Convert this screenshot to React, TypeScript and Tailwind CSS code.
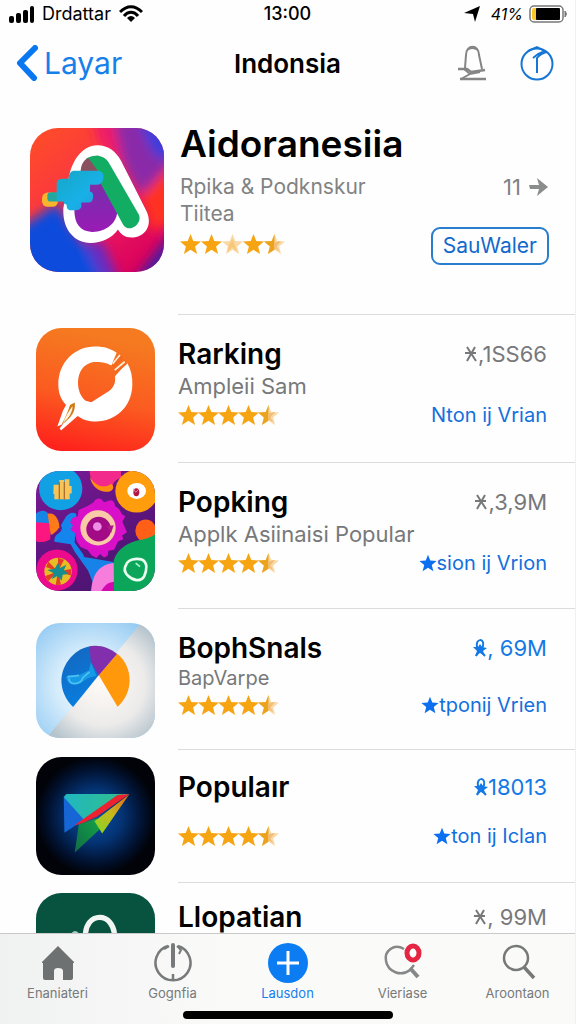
import type { ReactNode } from "react";

const STAR =
  "M12 1 L14.9 8.4 L23 8.9 L16.8 14 L18.9 22 L12 17.6 L5.1 22 L7.2 14 L1 8.9 L9.1 8.4 Z";
const HALF_STAR = "M12 1 L12 17.6 L5.1 22 L7.2 14 L1 8.9 L9.1 8.4 Z";

type Fill = "full" | "half" | "faint";

function Star({ fill }: { fill: Fill }) {
  return (
    <svg viewBox="1 0 22 23" className="h-[22px] w-[21px] shrink-0" aria-hidden="true">
      <path d={STAR} fill={fill === "full" ? "#f7a412" : "#f9d9a6"} />
      {fill === "half" && <path d={HALF_STAR} fill="#eba31d" />}
      {fill === "half" && <path d="M12 10 L19 8 L14 14 L17 19 L12 16 Z" fill="#f1bd78" />}
      {fill === "faint" && <path d="M12 6 L14 12 L17 20 L12 15 L7 20 L8 13 Z" fill="#f8c777" />}
    </svg>
  );
}

function Rating({ stars, wide }: { stars: Fill[]; wide?: boolean }) {
  return (
    <div className={wide ? "mt-1.5 flex" : "flex -space-x-px"} role="img" aria-label="4.5">
      {stars.map((s, i) => (
        <Star key={i} fill={s} />
      ))}
    </div>
  );
}

const USUAL: Fill[] = ["full", "full", "full", "full", "half"];

function HeroArt() {
  return (
    <svg viewBox="30 40 402 431" preserveAspectRatio="none" className="h-36 w-[134px]" aria-hidden="true">
      <defs>
        <clipPath id="heroClip"><rect x="30" y="40" width="402" height="431" rx="84" /></clipPath>
        <linearGradient id="heroBase" x1="0" y1="0" x2="0.8" y2="1">
          <stop offset="0" stopColor="#ff4f26" />
          <stop offset="0.35" stopColor="#fb3a3c" />
          <stop offset="0.6" stopColor="#f01e60" />
          <stop offset="1" stopColor="#d8005c" />
        </linearGradient>
        <linearGradient id="heroInner" x1="0" y1="0" x2="0" y2="1">
          <stop offset="0" stopColor="#a52b78" />
          <stop offset="0.5" stopColor="#7c2bb0" />
          <stop offset="1" stopColor="#9a1bb4" />
        </linearGradient>
        <linearGradient id="heroCyan" x1="0" y1="0" x2="1" y2="1">
          <stop offset="0" stopColor="#15a7c4" />
          <stop offset="0.6" stopColor="#18b0e8" />
          <stop offset="1" stopColor="#2b95cf" />
        </linearGradient>
        <filter id="heroBlur" x="-30%" y="-30%" width="160%" height="160%"><feGaussianBlur stdDeviation="16" /></filter>
      </defs>
      <g clipPath="url(#heroClip)">
        <rect x="30" y="40" width="402" height="431" fill="url(#heroBase)" />
        <g filter="url(#heroBlur)">
          <path d="M215 10 H300 L330 180 L240 90 Z" fill="#ee1a68" />
          <path d="M280 10 H460 V150 L370 250 L310 150 Z" fill="#8a2ba8" />
          <path d="M350 10 H470 V150 L400 120 Z" fill="#3a3cdc" />
          <path d="M460 140 L362 245 L395 350 L460 320 Z" fill="#ff3322" />
          <path d="M0 340 L110 265 L170 360 L280 500 H0 Z" fill="#0a4cdc" />
          <path d="M190 370 L250 385 L300 500 L240 480 Z" fill="#6a2ac0" />
          <path d="M460 340 L340 500 H460 Z" fill="#4a1fa0" />
        </g>
        <path d="M130 280 L144 210 C148 145 185 92 232 92 C266 92 287 111 303 138 L380 290 C400 335 372 368 335 368 C314 368 302 358 294 344 C274 371 245 384 212 384 C162 384 130 343 130 290 Z" fill="#fff" />
        <path d="M163 285 L181 180 C183 142 207 122 235 123 L292 285 C293 326 256 352 216 351 C180 350 163 326 163 285 Z" fill="url(#heroInner)" />
        <path d="M198 132 C221 118 253 119 267 145 L356 298 C370 326 328 356 310 330 L240 202 Z" fill="#12ad62" />
        <path d="M182 170 C183 146 194 134 205 130 L235 170 Z" fill="#8a5060" />
        <rect x="66" y="233" width="48" height="43" rx="17" fill="#f7b42d" />
        <rect x="82" y="232" width="55" height="28" rx="10" fill="#24a79f" />
        <path d="M160 168 H235 Q252 170 250 188 Q249 210 228 210 H210 V231 Q222 233 219 248 Q218 263 205 263 H184 V276 Q181 286 168 286 H149 Q139 284 140 270 L132 266 V259 H110 V204 Q112 193 124 192 H146 Q145 172 160 168 Z" fill="url(#heroCyan)" />
      </g>
    </svg>
  );
}

function OrangeArt() {
  return (
    <svg viewBox="35 25 357 368" preserveAspectRatio="none" className="h-[123px] w-[119px]" aria-hidden="true">
      <defs>
        <linearGradient id="orangeBg" x1="0.2" y1="0" x2="0" y2="1">
          <stop offset="0" stopColor="#f57a20" />
          <stop offset="0.5" stopColor="#fb5b20" />
          <stop offset="1" stopColor="#ff1a1c" />
        </linearGradient>
      </defs>
      <rect x="35" y="25" width="357" height="368" rx="76" fill="url(#orangeBg)" />
      <path d="M213 80 C240 80 258 86 277 99 L261 137 C240 125 224 126 207 127 C178 132 162 156 161 187 C161 211 169 230 184 243 L201 247 L247 218 C265 207 275 193 272 169 L308 128 C320 148 325 171 324 195 C323 260 274 305 215 305 C192 305 176 299 160 288 L110 332 L106 325 L116 312 L99 320 L116 272 L125 255 C108 236 102 217 102 193 C102 128 150 80 213 80 Z" fill="#fff" />
      <path d="M151 248 Q158 283 111 315 Q129 282 137 255 Z" fill="#d07a13" />
      <path d="M145 258 Q145 284 116 309 Q128 279 145 258 Z" fill="#fff4df" />
      <path d="M291 102 L263 140 L271 145 L296 119 Z M303 122 L267 154 L273 163 L309 132 Z" fill="#f56a1e" />
      <path d="M287 106 L265 132 M301 126 L271 151" stroke="#fff0dd" strokeWidth="5" />
    </svg>
  );
}

function PopArt() {
  return (
    <svg viewBox="35 27 357 361" preserveAspectRatio="none" className="h-[120px] w-[119px]" aria-hidden="true">
      <defs>
        <clipPath id="popClip"><rect x="35" y="27" width="357" height="361" rx="70" /></clipPath>
        <linearGradient id="popBg" x1="0" y1="0" x2="0.6" y2="1">
          <stop offset="0" stopColor="#7b1b98" /><stop offset="0.5" stopColor="#631583" /><stop offset="1" stopColor="#4a1570" />
        </linearGradient>
      </defs>
      <g clipPath="url(#popClip)">
        <rect x="35" y="27" width="357" height="361" fill="url(#popBg)" />
        <path d="M196 20 H290 V48 C270 55 262 66 266 80 C250 94 224 84 210 66 C199 53 195 38 196 20 Z" fill="#f12a8c" />
        <path d="M197 45 C218 80 246 77 261 65 C270 72 268 82 258 88 C231 96 201 75 197 45 Z" fill="#ff8d12" />
        <circle cx="109" cy="80" r="65" fill="#12a0e4" />
        <path d="M88 68 H105 V54 H119 V68 H121 V52 H135 V72 H142 V95 H136 V112 H90 V96 H87 Z" fill="#f5c45b" />
        <path d="M105 60 V113 M120 60 V113" stroke="#ad6e2b" strokeWidth="4" />
        <circle cx="337" cy="88" r="64" fill="#ff9d0c" />
        <ellipse cx="337" cy="87" rx="28" ry="24" fill="#fff" />
        <ellipse cx="336" cy="91" rx="9" ry="12" fill="#b31645" /><path d="M327 80 L334 91 L345 80" stroke="#dc8498" strokeWidth="3" fill="none" />
        <path d="M35 156 C48 144 64 148 77 157 L78 232 C64 241 47 243 35 238 Z" fill="#fb1680" />
        <path d="M35 155 Q55 139 71 154 L77 184 L35 181 Z" fill="#1686e6" />
        <path d="M70 156 C91 148 106 176 105 196 C97 208 85 219 79 219 Z" fill="#ff7a18" />
        <path d="M125 164 Q141 146 156 156 L151 242 L177 278 L196 333 L151 270 L139 247 L90 240 Q89 221 103 214 Q117 205 110 190 Z" fill="#1585ee" />
        <path d="M175 285 L268 301 L243 323 L208 369 Z" fill="#1782e8" />
        <ellipse cx="364" cy="207" rx="31" ry="34" fill="#ff5f16" />
        <path d="M190 132 L207 122 L214 113 Q224 106 232 113 L239 121 L258 115 Q271 115 272 132 L284 141 L293 157 L303 163 L294 180 L308 211 L293 221 L297 232 L281 239 L269 264 L252 267 L250 282 L239 287 L227 277 L216 289 L201 280 L190 265 L169 256 L157 238 L151 213 L138 204 L146 190 L137 181 L145 168 L160 163 L163 144 Z" fill="#d910c7" />
        <circle cx="221" cy="198" r="53" fill="#f8caa8" />
        <circle cx="223" cy="202" r="37" fill="#a30a85" />
        <path d="M247 193 L268 190 L260 214 Z" fill="#ad168b" />
        <circle cx="219" cy="194" r="13" fill="#ee8ee7" />
        <circle cx="98" cy="325" r="62" fill="#ec0a8d" />
        <circle cx="101" cy="329" r="41" fill="#e8bc25" />
        <path d="M101 329 L72 299 L65 316 Z M101 329 L101 288 L119 294 Z M101 329 L140 322 L140 341 Z M101 329 L110 369 L94 370 Z M101 329 L61 344 L72 358 Z" fill="#e33f24" />
        <path d="M101 303 L107 319 L126 309 L119 325 L132 337 L115 339 L112 357 L99 343 L83 352 L87 334 L69 325 L91 321 Z" fill="#168d91" />
        <path d="M200 390 C204 334 226 308 270 303 V390 Z" fill="#f77ddd" />
        <path d="M230 390 C242 366 257 360 273 360 V390 Z" fill="#d20ab0" />
        <path d="M268 298 C278 257 324 236 354 233 C378 230 388 217 400 216 V397 H269 Z" fill="#0ca65b" />
        <path d="M305 310 C311 292 334 289 352 293 C371 301 368 326 359 345 C350 362 325 356 311 342 C297 329 300 318 305 310 Z" fill="none" stroke="#eafff0" strokeWidth="8" />
        <path d="M334 304 L347 315" stroke="#b0f2ce" strokeWidth="5" />
      </g>
    </svg>
  );
}

function ArcArt() {
  return (
    <svg viewBox="35 24 356 345" preserveAspectRatio="none" className="h-[115px] w-[119px]" aria-hidden="true">
      <defs>
        <clipPath id="arcClip"><rect x="35" y="24" width="356" height="345" rx="72" /></clipPath>
        <radialGradient id="arcSky" gradientUnits="userSpaceOnUse" cx="200" cy="210" r="240">
          <stop offset="0" stopColor="#ffffff" /><stop offset="0.45" stopColor="#d3ebfb" /><stop offset="1" stopColor="#8fc8f2" />
        </radialGradient>
        <radialGradient id="arcLow" gradientUnits="userSpaceOnUse" cx="235" cy="205" r="210">
          <stop offset="0" stopColor="#fffaf5" /><stop offset="0.6" stopColor="#ecebea" /><stop offset="1" stopColor="#b4c3cc" />
        </radialGradient>
        <linearGradient id="arcBlue" x1="0" y1="0" x2="0.3" y2="1">
          <stop offset="0" stopColor="#1565bd" /><stop offset="1" stopColor="#087dde" />
        </linearGradient>
      </defs>
      <g clipPath="url(#arcClip)">
        <rect x="35" y="24" width="356" height="345" fill="url(#arcSky)" />
        <path d="M349 24 L72 362 V380 H400 V24 Z" fill="url(#arcLow)" />
        <path d="M146 276 C124 255 110 226 111 193 C113 146 152 96 208 92 L223 180 Z" fill="url(#arcBlue)" />
        <path d="M195 94 C228 88 254 99 278 117 L223 182 L199 139 Z" fill="#822fae" />
        <path d="M278 116 C302 135 315 164 315 195 C315 228 301 256 279 275 L223 181 Z" fill="#ff980b" />
        <path d="M199 142 L194 166 L163 181 L132 180 L125 186 C129 210 151 217 173 202 L190 190 L216 182 Z" fill="#159be5" />
        <path d="M129 186 L164 181 M134 190 C132 213 169 209 175 188 L195 171" fill="none" stroke="#51bff0" strokeWidth="5" />
      </g>
    </svg>
  );
}

function PlaneArt() {
  return (
    <svg viewBox="35 20 356 355" preserveAspectRatio="none" className="h-[118px] w-[119px]" aria-hidden="true">
      <defs>
        <radialGradient id="planeBg">
          <stop offset="0" stopColor="#074ba8" /><stop offset="0.45" stopColor="#043373" /><stop offset="0.8" stopColor="#01112f" /><stop offset="1" stopColor="#010309" />
        </radialGradient>
        <linearGradient id="planeTop"><stop offset="0" stopColor="#20b7c1" /><stop offset="1" stopColor="#32bf87" /></linearGradient>
        <linearGradient id="planeTail" x1="1" y1="0" x2="0" y2="1"><stop offset="0" stopColor="#13a347" /><stop offset="1" stopColor="#116b46" /></linearGradient>
        <linearGradient id="planeYellow" x1="1" y1="0" x2="0" y2="1"><stop offset="0" stopColor="#e26220" /><stop offset="0.5" stopColor="#c9b71b" /><stop offset="1" stopColor="#80d928" /></linearGradient>
      </defs>
      <rect x="35" y="20" width="356" height="355" rx="76" fill="url(#planeBg)" />
      <path d="M118 138 L190 202 L120 248 Z" fill="#1766d5" />
      <path d="M126 131 H314 L180 210 L118 140 Z" fill="url(#planeTop)" />
      <path d="M163 222 L217 204 L225 238 L151 307 Z" fill="url(#planeTail)" />
      <path d="M314 132 L233 250 L210 213 Z" fill="url(#planeYellow)" />
      <path d="M314 131 L279 134 L149 226 Q179 219 219 198 Z" fill="#ed2230" />
    </svg>
  );
}

function GreenArt() {
  return (
    <svg viewBox="35 429 356 356" className="size-[119px]" aria-hidden="true">
      <rect x="35" y="429" width="356" height="356" rx="76" fill="#07533f" />
      <path d="M183 562 C179 482 271 482 270 562" fill="none" stroke="#f3f5f2" strokeWidth="16" />
      <path d="M142 548 Q152 537 163 549 L155 570 Z" fill="#a6cdbf" />
    </svg>
  );
}

function Ribbon() {
  return (
    <svg viewBox="0 0 14 20" className="h-5 w-3.5" fill="none" stroke="currentColor" strokeWidth="2" aria-hidden="true">
      <path d="M4 9 C2 0 12 0 10 8 L3 18 M4 9 L12 18" />
      <path d="M0 9 L5 9 L7 6 L9 9 L14 10 L10 13 L12 18 L7 15 L2 18 L4 13 Z" fill="currentColor" stroke="none" />
    </svg>
  );
}

function CrossMark() {
  return (
    <svg viewBox="0 0 14 20" className="h-5 w-3.5" fill="none" stroke="currentColor" strokeWidth="2" aria-hidden="true">
      <path d="M3 3 L12 17 M11 3 L3 17 M1 9 H12" />
    </svg>
  );
}

function BlueStar() {
  return (
    <svg viewBox="1 0 22 23" className="size-[18px]" aria-hidden="true">
      <path d={STAR} fill="#0b6ff0" />
    </svg>
  );
}

type AppRow = {
  name: string;
  note?: string;
  noteClass?: string;
  art: ReactNode;
  artClass: string;
  bodyClass: string;
  count: string;
  blue?: boolean;
  action?: string;
  star?: boolean;
};

const ROWS: AppRow[] = [
  { name: "Rarking", note: "Ampleii Sam", noteClass: "text-[22px] leading-8", art: <OrangeArt />, artClass: "pt-[13px]", bodyClass: "pt-[23px] pb-[34px]", count: ",1SS66", action: "Nton ij Vrian" },
  { name: "Popking", note: "Applk Asiinaisi Popular", noteClass: "text-[22px] leading-8", art: <PopArt />, artClass: "pt-2", bodyClass: "pt-[23px] pb-8", count: ",3,9M", action: "sion ij Vrion", star: true },
  { name: "BophSnals", note: "BapVarpe", noteClass: "text-xl leading-7", art: <ArcArt />, artClass: "pt-3.5", bodyClass: "pt-[23px] pb-[31px]", count: ", 69M", blue: true, action: "tponij Vrien", star: true },
  { name: "Populaır", art: <PlaneArt />, artClass: "pt-[7px]", bodyClass: "pt-[21px] pb-[33px]", count: "18013", blue: true, action: "ton ij Iclan", star: true },
  { name: "Llopatian", art: <GreenArt />, artClass: "pt-2.5", bodyClass: "pt-[18px] pb-8", count: ", 99M" },
];

function Row({ row }: { row: AppRow }) {
  return (
    <li className="flex">
      <div className={`w-[178px] shrink-0 pl-9 ${row.artClass}`}>{row.art}</div>
      <div className={`min-w-0 flex-1 border-b border-[#dcdcdc] pr-7 ${row.bodyClass}`}>
        <div className="flex items-center justify-between">
          <h2 className="text-[28px] leading-8 font-semibold">{row.name}</h2>
          <span className={`flex items-center text-[22px] leading-8 whitespace-pre ${row.blue ? "text-[#1479e6]" : "text-[#77787a]"}`}>
            {row.blue ? <Ribbon /> : <CrossMark />}
            {row.count}
          </span>
        </div>
        {row.note && <p className={`text-[#77787a] ${row.noteClass}`}>{row.note}</p>}
        {row.action && (
          <div className={`flex h-[26px] items-center justify-between ${row.note ? "" : "mt-5"}`}>
            <Rating stars={USUAL} />
            <a href="#open" className="flex items-center text-xl leading-6 text-[#1270dd]">
              {row.star && <BlueStar />}
              {row.action}
            </a>
          </div>
        )}
      </div>
    </li>
  );
}

function HomeIcon() {
  return (
    <svg viewBox="0 0 40 40" className="size-10" fill="#6e7172" aria-hidden="true">
      <path d="M20 3 L36 19 V20 H35 V35 Q35 37 33 37 H25 V28 Q25 25 20 25 Q16 25 16 28 V37 H7 Q5 37 5 35 V20 H4 V19 Z" />
    </svg>
  );
}

function DialIcon() {
  return (
    <svg viewBox="0 0 40 40" className="size-10" fill="none" stroke="#77797a" aria-hidden="true">
      <path d="M15 3 A17.5 17.5 0 1 0 25 3" strokeWidth="2.5" />
      <path d="M20 2 V23" strokeWidth="4" strokeLinecap="round" />
      <path d="M20 31 V37 M11 6 L16 3" strokeWidth="2.5" />
      <path d="M24 3 L28 7 L26 11" strokeWidth="2" />
    </svg>
  );
}

function PlusIcon() {
  return (
    <svg viewBox="0 0 40 40" className="size-10" aria-hidden="true">
      <circle cx="20" cy="20" r="20" fill="#0c7cf3" />
      <path d="M20 8 V32 M9 20 H31" stroke="#fff" strokeWidth="3" />
    </svg>
  );
}

function BadgeSearchIcon() {
  return (
    <svg viewBox="0 0 40 40" className="size-10" fill="none" aria-hidden="true">
      <path d="M21 6 C11 0 1 8 3 18 C5 29 18 34 27 27 L31 22" stroke="#858788" strokeWidth="2.5" />
      <path d="M27 25 L35 34" stroke="#858788" strokeWidth="4" />
      <ellipse cx="30" cy="10" rx="6" ry="7" fill="#fff" stroke="#e52643" strokeWidth="5" />
    </svg>
  );
}

function SearchIcon() {
  return (
    <svg viewBox="0 0 40 40" className="size-10" fill="none" stroke="#777979" aria-hidden="true">
      <circle cx="18" cy="15" r="12" strokeWidth="2.5" />
      <path d="M26 24 L36 35" strokeWidth="3.5" />
    </svg>
  );
}

const TABS = [
  { label: "Enaniateri", icon: <HomeIcon /> },
  { label: "Gognfia", icon: <DialIcon /> },
  { label: "Lausdon", icon: <PlusIcon />, active: true },
  { label: "Vieriase", icon: <BadgeSearchIcon /> },
  { label: "Aroontaon", icon: <SearchIcon /> },
];

export default function App() {
  return (
    <div className="flex h-dvh flex-col overflow-hidden border-r border-[#f0f0f0] bg-[#fefefe] font-['Inter',sans-serif] text-black">
      <header className="shrink-0">
        <div className="grid h-7 grid-cols-3 items-center px-2 text-lg leading-7">
          <div className="flex items-center gap-2">
            <svg viewBox="0 0 26 18" className="h-[18px] w-[26px]" aria-hidden="true">
              <rect x="1" y="11" width="5" height="7" rx="2" /><rect x="8" y="8" width="5" height="10" rx="2" />
              <rect x="15" y="5" width="5" height="13" rx="2" /><rect x="22" y="1" width="4" height="17" rx="2" />
            </svg>
            <span>Drdattar</span>
            <svg viewBox="0 0 24 18" className="h-[18px] w-6" fill="none" stroke="#000" strokeWidth="3" aria-hidden="true">
              <path d="M1 7 C8 0 16 0 23 7 M5 11 C9 6 15 6 19 11" />
              <path d="M8 13 Q12 9 16 13 L12 17 Z" fill="#000" stroke="none" />
            </svg>
          </div>
          <time className="text-center font-medium">13:00</time>
          <div className="flex items-center justify-end gap-1.5">
            <svg viewBox="0 0 18 18" className="mr-1 size-[18px]" aria-hidden="true"><path d="M17 1 L12 17 L10 9 L1 8 Z" /></svg>
            <span className="text-base italic">41%</span>
            <svg viewBox="0 0 38 18" className="h-[18px] w-[38px]" aria-hidden="true">
              <rect x="1" y="1" width="33" height="16" rx="4" fill="#fff" stroke="#777" strokeWidth="1.5" />
              <path d="M3 5 Q3 3 5 3 H8 V15 H5 Q3 15 3 13 Z" fill="#f8c72c" />
              <rect x="7" y="3" width="24" height="12" rx="1" /><path d="M36 6 Q39 9 36 12 Z" fill="#777" stroke="#777" />
            </svg>
          </div>
        </div>
        <nav className="grid h-[70px] grid-cols-3 items-center px-4">
          <a href="#back" className="flex items-center gap-1.5 text-3xl text-[#1680ea]">
            <svg viewBox="0 0 22 36" className="h-9 w-[22px]" aria-hidden="true">
              <path d="M19 3 L4 18 L18 33" fill="none" stroke="#0878f2" strokeWidth="6" strokeLinecap="round" strokeLinejoin="round" />
            </svg>
            Layar
          </a>
          <h1 className="text-center text-[26px] font-semibold">Indonsia</h1>
          <div className="flex items-center justify-end gap-8 pr-1">
            <button type="button" aria-label="Notifikasi">
              <svg viewBox="0 0 30 36" className="h-9 w-[30px]" fill="none" stroke="#858585" strokeWidth="2" aria-hidden="true">
                <path d="M8 23 L9 10 C9 -1 22 -1 22 10 L25 24 M10 5 Q15 1 21 5" />
                <path d="M1 24 H10 L14 27 L28 25 M3 34 H29" strokeWidth="2.5" />
                <path d="M7 24 L13 29 L23 27 M13 29 L4 34" />
              </svg>
            </button>
            <button type="button" aria-label="Info">
              <svg viewBox="0 0 36 36" className="size-9" fill="none" stroke="#1775d5" strokeWidth="2" aria-hidden="true">
                <circle cx="18" cy="19" r="15.5" />
                <path d="M18 28 V13 Q22 8 28 7 M14 13 L19 9 L26 6 M9 6 L18 2 L27 7" />
              </svg>
            </button>
          </div>
        </nav>
      </header>

      <main className="min-h-0 flex-1 overflow-y-auto [scrollbar-width:none]">
        <section className="flex">
          <div className="w-[178px] shrink-0 pt-[30px] pl-[30px]"><HeroArt /></div>
          <div className="min-w-0 flex-1 border-b border-[#dcdcdc] pt-[22px] pr-[26px] pb-[49px] pl-0.5">
            <h2 className="text-[37px] leading-[48px] font-semibold">Aidoranesiia</h2>
            <div className="mt-[5px] flex justify-between text-[21px] leading-[27px] text-[#818283]">
              <p>Rpika &amp; Podknskur<br />Tiitea</p>
              <span className="flex h-7 items-center gap-2 text-[22px]">
                11
                <svg viewBox="0 0 20 20" className="size-5" fill="#8b8c8c" aria-hidden="true">
                  <path d="M0 8 H10 L8 1 L19 10 L8 19 L10 12 H1 Z" />
                </svg>
              </span>
            </div>
            <div className="flex items-start justify-between">
              <Rating stars={["full", "full", "faint", "full", "half"]} wide />
              <button type="button" className="h-[38px] rounded-[9px] border-2 border-[#287dcd] px-2.5 text-[21px] leading-8 text-[#1269cb]">
                SauWaler
              </button>
            </div>
          </div>
        </section>
        <ul>
          {ROWS.map((row) => (
            <Row key={row.name} row={row} />
          ))}
        </ul>
      </main>

      <footer className="shrink-0 border-t border-[#c9c9c9] bg-linear-to-r from-[#f0f2f1] to-[#fafaf9] to-40% pt-[9px] pb-[5px]">
        <nav className="grid grid-cols-5">
          {TABS.map((tab) => (
            <a
              key={tab.label}
              href={`#${tab.label}`}
              className={`flex flex-col items-center text-[13px] leading-5 ${tab.active ? "text-[#1480ee]" : "text-[#77797a]"}`}
            >
              {tab.icon}
              {tab.label}
            </a>
          ))}
        </nav>
        <div className="mx-auto mt-2 h-2 w-[210px] rounded-full bg-black" />
      </footer>
    </div>
  );
}
